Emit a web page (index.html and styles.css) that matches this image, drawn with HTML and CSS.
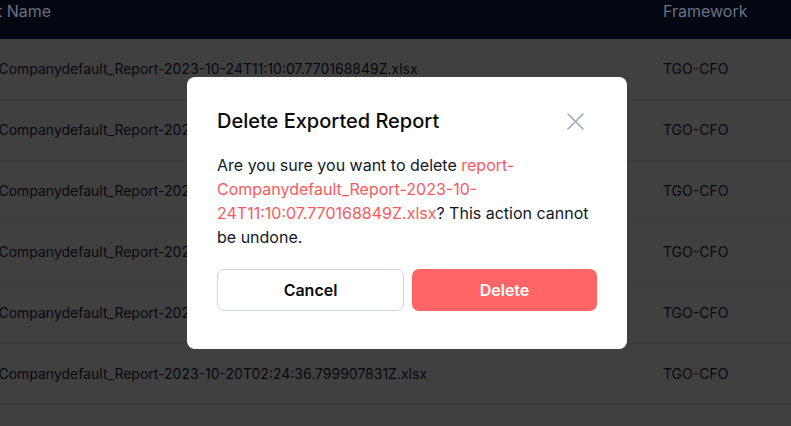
FILE: index.html
```html
<!DOCTYPE html>
<html>
<head>
    <link rel="stylesheet" href="styles.css">
</head>
<body>
    <div class="reports">
        <div class="table-head">
            <div class="cell cell-name">Report Name</div>
            <div class="cell cell-framework">Framework</div>
        </div>

        <div class="table-row">
            <div class="cell cell-name">report-Companydefault_Report-2023-10-24T11:10:07.770168849Z.xlsx</div>
            <div class="cell cell-framework">TGO-CFO</div>
        </div>
        <div class="table-row">
            <div class="cell cell-name">report-Companydefault_Report-2023-10-23T16:42:19.118204573Z.xlsx</div>
            <div class="cell cell-framework">TGO-CFO</div>
        </div>
        <div class="table-row">
            <div class="cell cell-name">report-Companydefault_Report-2023-10-23T09:05:51.604731290Z.xlsx</div>
            <div class="cell cell-framework">TGO-CFO</div>
        </div>
        <div class="table-row">
            <div class="cell cell-name">report-Companydefault_Report-2023-10-22T14:37:02.281947615Z.xlsx</div>
            <div class="cell cell-framework">TGO-CFO</div>
        </div>
        <div class="table-row">
            <div class="cell cell-name">report-Companydefault_Report-2023-10-21T08:12:44.930516782Z.xlsx</div>
            <div class="cell cell-framework">TGO-CFO</div>
        </div>
        <div class="table-row">
            <div class="cell cell-name">report-Companydefault_Report-2023-10-20T02:24:36.799907831Z.xlsx</div>
            <div class="cell cell-framework">TGO-CFO</div>
        </div>
        <div class="table-row">
            <div class="cell cell-name">report-Companydefault_Report-2023-10-19T19:50:13.457120938Z.xlsx</div>
            <div class="cell cell-framework">TGO-CFO</div>
        </div>
    </div>

    <div class="overlay">
        <div class="modal">
            <div class="modal-header">
                <h2 class="modal-title">Delete Exported Report</h2>
                <button class="close-btn" aria-label="Close">
                    <svg width="17" height="17" viewBox="0 0 17 17" fill="none" stroke="currentColor" stroke-width="1.6" stroke-linecap="round">
                        <path d="M1 1L16 16M16 1L1 16" />
                    </svg>
                </button>
            </div>

            <p class="modal-text">
                Are you sure you want to delete <span class="file-name">report-Companydefault_Report-2023-10-24T11:10:07.770168849Z.xlsx</span>? This action cannot be undone.
            </p>

            <div class="modal-actions">
                <button class="btn btn-cancel">Cancel</button>
                <button class="btn btn-delete">Delete</button>
            </div>
        </div>
    </div>
</body>
</html>
```

FILE: styles.css
```css
* {
    margin: 0;
    padding: 0;
    box-sizing: border-box;
}

body {
    font-family: 'Inter', 'Liberation Sans', sans-serif;
    background-color: #ffffff;
    color: #374151;
    overflow: hidden;
    height: 100vh;
}

.reports {
    margin-left: -48px;
    width: 1100px;
}

.table-head {
    position: relative;
    z-index: 20;
    display: flex;
    align-items: flex-start;
    height: 39px;
    background-color: #030712;
    color: #6a7282;
    font-size: 16px;
    line-height: 22px;
}

.table-row {
    display: flex;
    align-items: center;
    height: 61px;
    border-bottom: 1px solid #e5e7eb;
    font-size: 14px;
    line-height: 20px;
    color: #1f2937;
}

.cell-name {
    width: 711px;
    white-space: nowrap;
}

.cell-framework {
    width: 200px;
    white-space: nowrap;
}

.overlay {
    position: fixed;
    inset: 0;
    z-index: 10;
    background-color: rgba(0, 0, 0, 0.75);
    display: flex;
    justify-content: center;
    align-items: center;
    padding-left: 23px;
}

.modal {
    width: 440px;
    background: #ffffff;
    border-radius: 8px;
    padding: 28px 30px 38px;
}

.modal-header {
    display: flex;
    justify-content: space-between;
    align-items: center;
    height: 32px;
}

.modal-title {
    font-size: 20px;
    line-height: 28px;
    font-weight: 500;
    color: #0a0a0a;
}

.close-btn {
    width: 24px;
    height: 32px;
    margin-right: 10px;
    display: flex;
    align-items: center;
    justify-content: center;
    background: none;
    border: none;
    color: #a1a9b4;
    cursor: pointer;
}

.modal-text {
    margin-top: 16px;
    font-size: 16px;
    line-height: 24px;
    color: #101828;
}

.file-name {
    color: #fa5a5e;
}

.modal-actions {
    display: flex;
    gap: 8px;
    margin-top: 20px;
}

.btn {
    flex: 1;
    height: 42px;
    border-radius: 7px;
    font-family: inherit;
    font-size: 16px;
    font-weight: 600;
    cursor: pointer;
}

.btn-cancel {
    background: #ffffff;
    border: 1px solid #d1d5dc;
    color: #0a0a0a;
}

.btn-delete {
    background: #ff6467;
    border: none;
    color: #ffffff;
}
```
